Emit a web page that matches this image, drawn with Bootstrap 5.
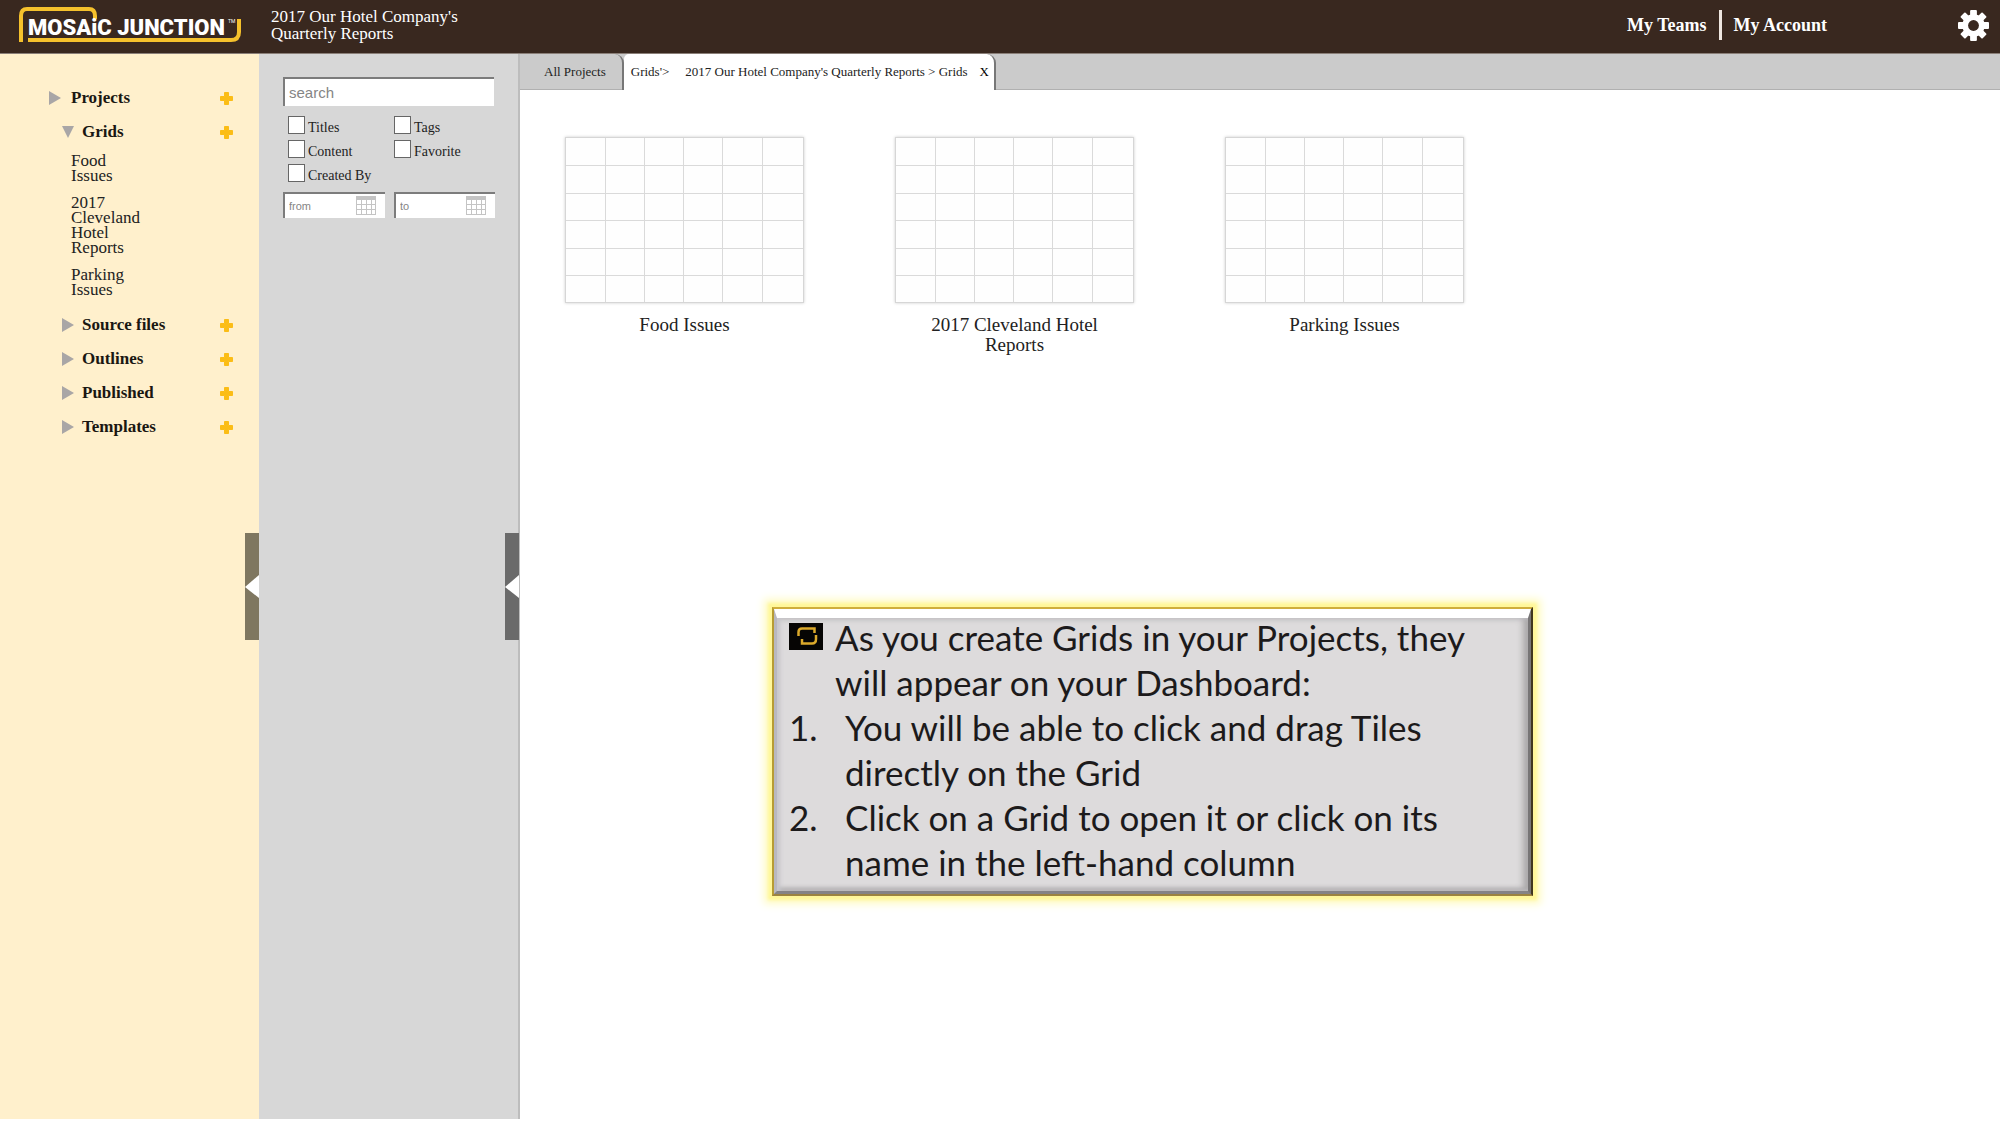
<!DOCTYPE html>
<html lang="en">
<head>
<meta charset="utf-8">
<meta name="viewport" content="width=device-width, initial-scale=1">
<title>Mosaic Junction</title>
<link rel="stylesheet" href="https://cdn.jsdelivr.net/npm/bootstrap@5.3.0/dist/css/bootstrap.min.css">
<style>
  body { font-family: "Liberation Serif", serif; color: #222; background: #fff; }
  a { color: inherit; text-decoration: none; }
  ul, ol { list-style: none; margin: 0; padding: 0; }
  .top-bar { background: #39281f; color: #fff; height: 54px; border-bottom: 1px solid #8a7f78; padding: 0 11px 3px 18px; }
  .brand { width: 224px; height: 36px; }
  .project-name { font-size: 17px; line-height: 17px; width: 196px; margin-left: 29px; }
  .top-links { font-size: 18px; line-height: 20px; font-weight: 700; margin-right: 131px; gap: 12px; }
  .top-links .rule { width: 3px; height: 30px; background: #eee6e0; }
  .plain-btn { background: none; border: 0; padding: 0; line-height: 0; display: block; }
  .workspace { margin-bottom: 6px; }

  .tree-pane { width: 259px; background: #fff0cc; padding: 27px 25px 0 49px; }
  .tree-row { height: 34px; font-size: 17px; font-weight: 700; color: #1a1712; }
  .tree-row .twisty { width: 12px; height: 14px; margin-right: 10px; }
  .tree-sub { padding-left: 13px; }
  .tree-sub .twisty { margin-right: 8px; }
  .leaf-list { padding: 4px 0 11px 9px; display: grid; gap: 12px; font-size: 17px; line-height: 15px; }
  .leaf-list li { width: 72px; }

  .filter-pane { width: 261px; background: #d7d7d7; border-right: 2px solid #bdbdbd; padding: 23px 24px 0; }
  .sunk { border: 0 solid #7c7c7c; border-top-width: 2px; border-left-width: 2px; border-radius: 0; background: #fff; font-family: "Liberation Sans", sans-serif; color: #555; width: 100%; }
  .sunk::placeholder { color: #858585; opacity: 1; }
  .search-box { height: 29px; font-size: 15px; padding: 0 4px; }
  .date-box { height: 26px; font-size: 11px; padding: 0 32px 0 4px; }
  .date-icon { right: 9px; top: 4px; }
  .checks { display: grid; grid-template-columns: 106px 1fr; padding: 9px 0 0 5px; }
  .checks label { height: 24px; font-size: 14px; line-height: 24px; padding-top: 2px; gap: 3px; }
  .checks input { appearance: none; width: 17px; height: 18px; margin: 0 0 6px; border: 1px solid #666; background: #fff; }
  .dates { display: grid; grid-template-columns: 102px 101px; gap: 9px; margin-top: 5px; }
  .handle { top: 479px; right: 0; width: 14px; height: 107px; background: #7f7760; }
  .filter-pane .handle { background: #6a6a6a; right: -1px; }

  .tab-strip { background: #cbcbcb; height: 36px; border-bottom: 1px solid #b0b0b0; font-size: 13px; line-height: 18px; }
  .page-tab { border-right: 2px solid #777; border-top-right-radius: 9px; height: 36px; }
  .page-tab.current { background: #fff; border-top-left-radius: 5px; padding: 0 5px 0 7px; }
  .thumbs { padding: 47px 45px 0; gap: 91px; }
  .thumb { width: 239px; text-align: center; font-size: 19px; line-height: 20px; }
  .thumb svg { display: block; width: 239px; height: 166px; background: #fefefe; border: 1px solid #d6d6d6; box-shadow: 0 0 3px #ccc; margin-bottom: 12px; }
  .thumb span { display: block; padding: 0 20px; }

  .note { left: 252px; top: 553px; width: 761px; border: 2px solid; border-color: #cfae3c #40361f #9c8340 #b79c33; box-shadow: 0 0 3px 4px #fff799, 0 0 8px 8px #fffbc4; }
  .note-face { background: #dddbdc; border: 0 solid #fff; border-top-width: 9px; border-left: 3px solid #b9b8bf; border-right: 3px solid #777576; border-bottom: 3px solid #858385;
    box-shadow: inset 3px 0 4px #c9c8cd, inset -5px 0 6px #aaa8a9, inset 0 -3px 4px #b3b1b2; padding: 0 40px 6px 12px; font-family: Lato, sans-serif; font-size: 35px; line-height: 45px; color: #1c1a1b; }
  .note-face > * { margin-top: -3px; }
  .note-face > ol { margin-top: 0; }
  .note-face .marker { width: 56px; flex: none; }
  .note-face .marker.pic { width: 46px; padding-top: 8px; line-height: 0; }
</style>
</head>
<body>
<div class="d-flex flex-column min-vh-100">
  <header class="top-bar d-flex align-items-center">
    <a href="#" aria-label="Mosaic Junction home">
      <svg class="brand d-block" viewBox="0 0 224 36">
        <path d="M3 35V9Q3 2 9 2H71Q77 2 77 9V12" fill="none" stroke="#f5c12c" stroke-width="4"/>
        <path d="M10 33H213Q221 33 221 25V12" fill="none" stroke="#f5c12c" stroke-width="4"/>
        <text x="10" y="28" font-family="Roboto, sans-serif" font-weight="900" font-size="22" fill="#fff">MOSAiC JUNCTION</text>
        <text x="210" y="16" font-family="Roboto, sans-serif" font-size="5" fill="#fff">TM</text>
      </svg>
    </a>
    <div class="project-name">2017 Our Hotel Company's Quarterly Reports</div>
    <nav class="top-links d-flex align-items-center ms-auto">
      <a href="#">My Teams</a><span class="rule"></span><a href="#">My Account</a>
    </nav>
    <button class="plain-btn" type="button" aria-label="Settings">
      <svg width="31" height="31" viewBox="-16 -16 32 32">
        <g fill="#fff"><g id="teeth"><rect x="-3.5" y="-16" width="7" height="32" rx="1"/><rect x="-16" y="-3.5" width="32" height="7" rx="1"/></g><use href="#teeth" transform="rotate(45)"/><circle r="11.5"/></g>
        <circle r="5.6" fill="#39281f"/>
      </svg>
    </button>
  </header>

  <div class="workspace d-flex flex-grow-1">
    <svg class="d-none">
      <symbol id="plus" viewBox="0 0 15 15"><path d="M5.500 1.500h4v4h4v4h-4v4h-4v-4h-4v-4h4z" fill="#fbbd16" stroke="#fbbd16" stroke-linejoin="round"/></symbol>
      <symbol id="closed" viewBox="0 0 12 14"><path d="M0 0L12 7L0 14z" fill="#a9a6a6"/></symbol>
      <symbol id="open" viewBox="0 0 12 14"><path d="M0 1H12L6 13z" fill="#a9a6a6"/></symbol>
      <symbol id="cal" viewBox="0 0 20 19"><path d="M0 0H20V19H0z" fill="#c4c4c4"/><path d="M1 4h4v4H1zM6 4h4v4H6zM11 4h4v4h-4zM16 4h3v4h-3zM1 9h4v4H1zM6 9h4v4H6zM11 9h4v4h-4zM16 9h3v4h-3zM1 14h4v4H1zM6 14h4v4H6zM11 14h4v4h-4zM16 14h3v4h-3z" fill="#fff"/></symbol>
      <symbol id="left" viewBox="0 0 14 107"><path d="M14 42V65L0 54z" fill="#fff"/></symbol>
      <symbol id="lattice" viewBox="0 0 237 164"><path d="M39.500 0V164M78.500 0V164M117.500 0V164M156.500 0V164M196.500 0V164M0 27.500H237M0 55.500H237M0 82.500H237M0 110.500H237M0 137.500H237" stroke="#dadada" stroke-width="1"/></symbol>
    </svg>

    <aside class="tree-pane position-relative flex-shrink-0">
      <div class="tree-row d-flex align-items-center"><svg class="twisty"><use href="#closed"/></svg><a href="#">Projects</a><button class="plain-btn ms-auto" type="button" aria-label="Add project"><svg width="15" height="15"><use href="#plus"/></svg></button></div>
      <div class="tree-sub">
        <div class="tree-row d-flex align-items-center"><svg class="twisty"><use href="#open"/></svg><a href="#">Grids</a><button class="plain-btn ms-auto" type="button" aria-label="Add grid"><svg width="15" height="15"><use href="#plus"/></svg></button></div>
        <ul class="leaf-list">
          <li><a href="#">Food Issues</a></li>
          <li><a href="#">2017 Cleveland Hotel Reports</a></li>
          <li><a href="#">Parking Issues</a></li>
        </ul>
        <div class="tree-row d-flex align-items-center"><svg class="twisty"><use href="#closed"/></svg><a href="#">Source files</a><button class="plain-btn ms-auto" type="button" aria-label="Add source file"><svg width="15" height="15"><use href="#plus"/></svg></button></div>
        <div class="tree-row d-flex align-items-center"><svg class="twisty"><use href="#closed"/></svg><a href="#">Outlines</a><button class="plain-btn ms-auto" type="button" aria-label="Add outline"><svg width="15" height="15"><use href="#plus"/></svg></button></div>
        <div class="tree-row d-flex align-items-center"><svg class="twisty"><use href="#closed"/></svg><a href="#">Published</a><button class="plain-btn ms-auto" type="button" aria-label="Add published"><svg width="15" height="15"><use href="#plus"/></svg></button></div>
        <div class="tree-row d-flex align-items-center"><svg class="twisty"><use href="#closed"/></svg><a href="#">Templates</a><button class="plain-btn ms-auto" type="button" aria-label="Add template"><svg width="15" height="15"><use href="#plus"/></svg></button></div>
      </div>
      <button class="plain-btn handle position-absolute" type="button" aria-label="Collapse tree"><svg width="14" height="107"><use href="#left"/></svg></button>
    </aside>

    <aside class="filter-pane position-relative flex-shrink-0">
      <form>
        <input class="sunk search-box d-block" type="text" placeholder="search" aria-label="search">
        <div class="checks">
          <label class="d-flex align-items-center"><input type="checkbox">Titles</label>
          <label class="d-flex align-items-center"><input type="checkbox">Tags</label>
          <label class="d-flex align-items-center"><input type="checkbox">Content</label>
          <label class="d-flex align-items-center"><input type="checkbox">Favorite</label>
          <label class="d-flex align-items-center"><input type="checkbox">Created By</label>
        </div>
        <div class="dates">
          <div class="position-relative"><input class="sunk date-box d-block" type="text" placeholder="from" aria-label="from"><svg class="date-icon position-absolute" width="20" height="19"><use href="#cal"/></svg></div>
          <div class="position-relative"><input class="sunk date-box d-block" type="text" placeholder="to" aria-label="to"><svg class="date-icon position-absolute" width="20" height="19"><use href="#cal"/></svg></div>
        </div>
      </form>
      <button class="plain-btn handle position-absolute" type="button" aria-label="Collapse filters"><svg width="14" height="107"><use href="#left"/></svg></button>
    </aside>

    <main class="position-relative flex-grow-1">
      <nav class="tab-strip d-flex">
        <a class="page-tab d-flex align-items-center ps-4 pe-3" href="#">All Projects</a>
        <div class="page-tab current d-flex align-items-center">
          <a class="me-3" href="#">Grids'&gt;</a><a class="me-2 pe-1" href="#">2017 Our Hotel Company's Quarterly Reports &gt; Grids</a><button class="plain-btn lh-base" type="button" aria-label="Close tab">X</button>
        </div>
      </nav>
      <div class="thumbs d-flex flex-wrap">
        <a class="thumb" href="#"><svg><use href="#lattice"/></svg><span>Food Issues</span></a>
        <a class="thumb" href="#"><svg><use href="#lattice"/></svg><span>2017 Cleveland Hotel Reports</span></a>
        <a class="thumb" href="#"><svg><use href="#lattice"/></svg><span>Parking Issues</span></a>
      </div>

      <section class="note position-absolute">
        <div class="note-face">
          <div class="d-flex">
            <span class="marker pic"><svg width="34" height="27" viewBox="0 0 34 27"><path d="M0 0H34V27H0z" fill="#060504"/><path d="M9.500 13V9Q9.500 5.500 13 5.500H25.500V10M27 12V16Q27 20.500 23 20.500H13V16" fill="none" stroke="#dba92b" stroke-width="2.500"/></svg></span>
            <span>As you create Grids in your Projects, they will appear on your Dashboard:</span>
          </div>
          <ol>
            <li class="d-flex"><span class="marker">1.</span><span>You will be able to click and drag Tiles directly on the Grid</span></li>
            <li class="d-flex"><span class="marker">2.</span><span>Click on a Grid to open it or click on its name in the left-hand column</span></li>
          </ol>
        </div>
      </section>
    </main>
  </div>
</div>
<script src="https://cdn.jsdelivr.net/npm/bootstrap@5.3.0/dist/js/bootstrap.bundle.min.js"></script>
</body>
</html>
